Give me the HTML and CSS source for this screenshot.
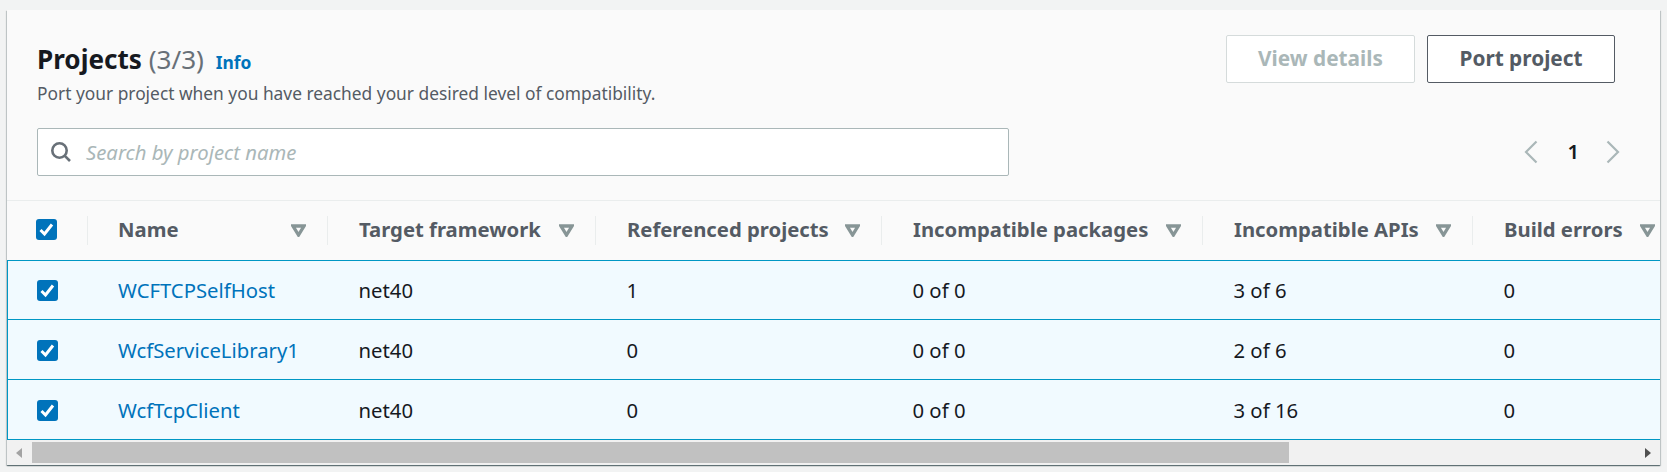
FILE: index.html
```html
<!DOCTYPE html>
<html lang="en">
<head>
<meta charset="utf-8">
<title>Projects</title>
<link rel="stylesheet" href="styles.css">
</head>
<body>
<section class="card">
  <header class="card-header">
    <div class="top-row">
      <div class="heading">
        <h2 class="title">Projects <span class="count">(3/3)</span> <a class="info" href="#">Info</a></h2>
        <p class="desc">Port your project when you have reached your desired level of compatibility.</p>
      </div>
      <div class="actions">
        <button class="btn btn-disabled" type="button">View details</button>
        <button class="btn" type="button">Port project</button>
      </div>
    </div>
    <div class="tools-row">
      <div class="search">
        <svg class="search-icon" viewBox="0 0 22 22" width="22" height="22"><circle cx="9.5" cy="9.5" r="7.2"/><path d="M14.8 14.8 20 20"/></svg>
        <span class="placeholder">Search by project name</span>
      </div>
      <nav class="pager">
        <svg viewBox="0 0 14 24" width="14" height="24"><path d="M12.5 1.5 2 12l10.500 10.500"/></svg>
        <span class="page-num">1</span>
        <svg viewBox="0 0 14 24" width="14" height="24"><path d="M1.500 1.500 12 12 1.500 22.500"/></svg>
      </nav>
    </div>
  </header>
  <div class="table-wrap">
    <table class="table">
      <colgroup>
        <col class="c0"><col class="c1"><col class="c2"><col class="c3"><col class="c4"><col class="c5"><col class="c6">
      </colgroup>
      <thead>
        <tr>
          <th class="check-cell"><span class="check check-head"><svg viewBox="0 0 21 21"><path d="M4.500 11l4 4 7.500-9.500"/></svg></span></th>
          <th><div class="th"><span class="th-label">Name</span><svg class="sort" viewBox="0 0 15 13"><path d="M2 2h11L7.500 11z"/></svg></div></th>
          <th><div class="th"><span class="th-label">Target framework</span><svg class="sort" viewBox="0 0 15 13"><path d="M2 2h11L7.500 11z"/></svg></div></th>
          <th><div class="th"><span class="th-label">Referenced projects</span><svg class="sort" viewBox="0 0 15 13"><path d="M2 2h11L7.500 11z"/></svg></div></th>
          <th><div class="th"><span class="th-label">Incompatible packages</span><svg class="sort" viewBox="0 0 15 13"><path d="M2 2h11L7.500 11z"/></svg></div></th>
          <th><div class="th"><span class="th-label">Incompatible APIs</span><svg class="sort" viewBox="0 0 15 13"><path d="M2 2h11L7.500 11z"/></svg></div></th>
          <th><div class="th"><span class="th-label">Build errors</span><svg class="sort" viewBox="0 0 15 13"><path d="M2 2h11L7.500 11z"/></svg></div></th>
        </tr>
      </thead>
      <tbody>
        <tr>
          <td class="check-cell"><span class="check"><svg viewBox="0 0 21 21"><path d="M4.500 11l4 4 7.500-9.500"/></svg></span></td>
          <td><a href="#">WCFTCPSelfHost</a></td><td>net40</td><td>1</td><td>0 of 0</td><td>3 of 6</td><td>0</td>
        </tr>
        <tr>
          <td class="check-cell"><span class="check"><svg viewBox="0 0 21 21"><path d="M4.500 11l4 4 7.500-9.500"/></svg></span></td>
          <td><a href="#">WcfServiceLibrary1</a></td><td>net40</td><td>0</td><td>0 of 0</td><td>2 of 6</td><td>0</td>
        </tr>
        <tr>
          <td class="check-cell"><span class="check"><svg viewBox="0 0 21 21"><path d="M4.500 11l4 4 7.500-9.500"/></svg></span></td>
          <td><a href="#">WcfTcpClient</a></td><td>net40</td><td>0</td><td>0 of 0</td><td>3 of 16</td><td>0</td>
        </tr>
      </tbody>
    </table>
  </div>
  <div class="scrollbar">
    <span class="arrow arrow-left"></span>
    <div class="track"><div class="thumb"></div></div>
    <span class="arrow arrow-right"></span>
  </div>
</section>
</body>
</html>
```
FILE: styles.css
```css
* { box-sizing: border-box; }
html, body { margin: 0; height: 100%; }
body {
  background: #f2f3f3;
  padding: 10px 7px 0;
  font-family: "Noto Sans", sans-serif;
  font-size: 20.3px;
  color: #16191f;
  overflow: hidden;
}
.card {
  width: 1653px;
  height: 455px;
  background: #fafafa;
  box-shadow: 0 1px 1px 0 rgba(0,28,36,.45), 1px 1px 1px 0 rgba(0,28,36,.15), -1px 1px 1px 0 rgba(0,28,36,.15);
  display: flex;
  flex-direction: column;
}
.card-header {
  flex: none;
  height: 191px;
  padding: 25px 31px 0 30px;
  border-bottom: 1px solid #eaeded;
}
.top-row { display: flex; justify-content: space-between; align-items: flex-start; height: 93px; }
.heading { padding-top: 8px; }
.title { margin: 0; font-size: 26.1px; line-height: 32px; font-weight: 700; }
.count { font-weight: 400; color: #687078; }
.info { font-size: 17.4px; font-weight: 700; color: #0073bb; text-decoration: none; margin-left: 5px; }
.desc { margin: 3px 0 0; font-size: 17.35px; line-height: 24px; color: #545b64; }
.actions { display: flex; gap: 12px; margin-right: 14px; }
.btn {
  width: 188px;
  height: 48px;
  padding: 0 0 2px;
  border: 1px solid #545b64;
  border-radius: 2px;
  background: #fff;
  color: #545b64;
  font: 700 20.8px "Noto Sans", sans-serif;
}
.btn-disabled { width: 189px; color: #aab7b8; border-color: #d5dbdb; }
.tools-row { display: flex; align-items: center; justify-content: space-between; }
.search {
  width: 972px;
  height: 48px;
  border: 1px solid #aab7b8;
  border-radius: 2px;
  background: #fff;
  display: flex;
  align-items: center;
  gap: 14px;
  padding-left: 12px;
}
.search-icon { fill: none; stroke: #687078; stroke-width: 2.6; }
.placeholder { font-style: italic; color: #aab7b8; }
.pager { display: flex; align-items: center; margin-right: 9px; }
.pager svg { fill: none; stroke: #aab7b8; stroke-width: 2.200; }
.page-num { font-weight: 600; color: #16191f; padding: 0 27px 2px 29px; }
.table-wrap { flex: none; height: 239px; overflow: hidden; }
.table { border-collapse: separate; border-spacing: 0; table-layout: fixed; width: 1669px; }
.c0 { width: 80px; }
.c1 { width: 240px; }
.c2 { width: 268px; }
.c3 { width: 286px; }
.c4 { width: 321px; }
.c5 { width: 270px; }
.c6 { width: 204px; }
th {
  height: 59px;
  padding: 0 0 1px;
  text-align: left;
  font-weight: 700;
  color: #545b64;
}
.th {
  height: 29px;
  padding: 0 21px 0 30px;
  border-left: 1px solid #eaeded;
  display: flex;
  align-items: center;
  justify-content: space-between;
}
.th-label { padding-bottom: 3px; }
th:nth-child(n+3) .th { padding-left: 31px; }
.sort { width: 15px; height: 13px; fill: none; stroke: #879596; stroke-width: 3.300; flex: none; }
td {
  height: 60px;
  padding: 0 0 0 31px;
  background: #f1faff;
  border-bottom: 1px solid #0097c4;
}
td:nth-child(n+3) { padding-left: 31.500px; }
tbody tr:first-child td { border-top: 1px solid #0097c4; }
td a { color: #0073bb; text-decoration: none; }
td.check-cell { padding: 1px 0 0 29px; border-left: 1px solid #0097c4; }
th.check-cell { padding: 0 0 2px 29px; }
.check {
  display: block;
  width: 21px;
  height: 21px;
  border-radius: 3px;
  background: #0073bb;
}
.check svg { display: block; width: 21px; height: 21px; fill: none; stroke: #fff; stroke-width: 3; }
.scrollbar {
  flex: 1;
  background: #f1f1f1;
  display: flex;
  align-items: center;
  padding: 0 9px;
}
.arrow { width: 0; height: 0; border-top: 5.500px solid transparent; border-bottom: 5.500px solid transparent; flex: none; }
.arrow-left { border-right: 6px solid #a3a3a3; }
.arrow-right { border-left: 6px solid #505050; }
.track { flex: 1; padding: 0 10px; }
.thumb { width: 1257px; height: 21px; background: #c1c1c1; }
```
